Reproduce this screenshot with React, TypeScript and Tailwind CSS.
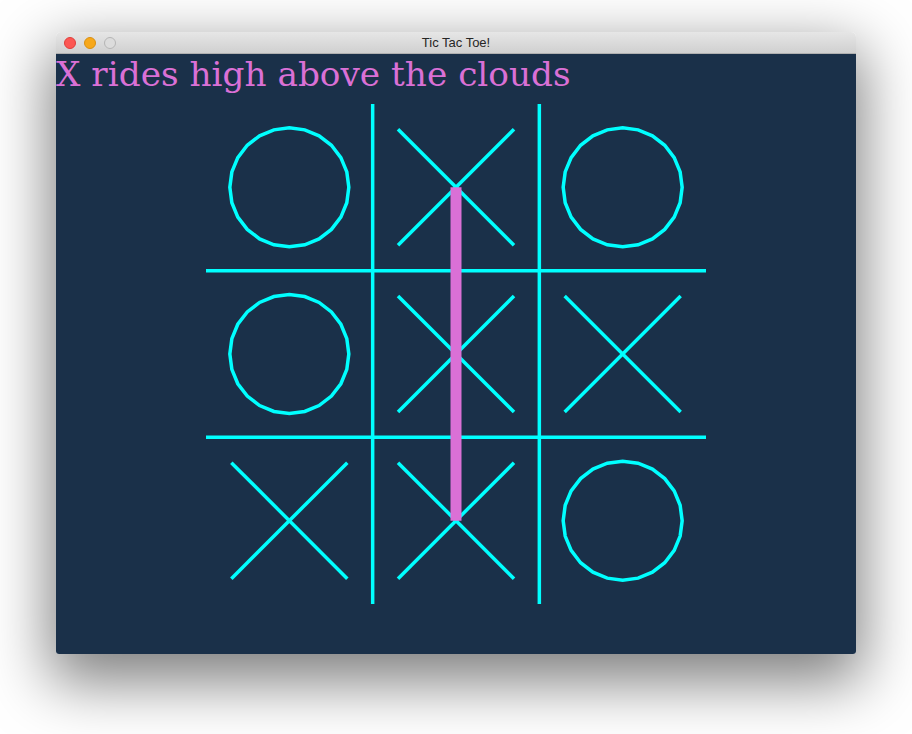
import React from 'react';

const CELL = 500 / 3;
const board: string[][] = [
  ['O', 'X', 'O'],
  ['O', 'X', 'X'],
  ['X', 'X', 'O'],
];

function ring(cx: number, cy: number, r: number, n = 24) {
  const pts: string[] = [];
  for (let i = 0; i < n; i++) {
    const a = (i / n) * Math.PI * 2;
    pts.push(`${(cx + r * Math.cos(a)).toFixed(2)},${(cy + r * Math.sin(a)).toFixed(2)}`);
  }
  return pts.join(' ');
}

function Board() {
  const ox = 150;
  return (
    <svg width={800} height={550} viewBox="0 0 800 550" className="block">
      <g stroke="#00ffff" strokeWidth={3.5}>
        <line x1={ox + CELL} y1={0} x2={ox + CELL} y2={500} />
        <line x1={ox + CELL * 2} y1={0} x2={ox + CELL * 2} y2={500} />
        <line x1={ox} y1={CELL} x2={ox + 500} y2={CELL} />
        <line x1={ox} y1={CELL * 2} x2={ox + 500} y2={CELL * 2} />
      </g>
      <g stroke="#00ffff" strokeWidth={3.5} fill="none">
        {board.map((row, r) =>
          row.map((v, c) => {
            const cx = ox + CELL * c + CELL / 2;
            const cy = CELL * r + CELL / 2;
            if (v === 'O') return <polygon key={`${r}-${c}`} points={ring(cx, cy, 59.5)} />;
            const h = 58;
            return (
              <g key={`${r}-${c}`}>
                <line x1={cx - h} y1={cy - h} x2={cx + h} y2={cy + h} />
                <line x1={cx + h} y1={cy - h} x2={cx - h} y2={cy + h} />
              </g>
            );
          })
        )}
      </g>
      <line x1={ox + CELL * 1.5} y1={CELL / 2} x2={ox + CELL * 1.5} y2={CELL * 2.5} stroke="#da70d6" strokeWidth={11} />
    </svg>
  );
}

export default function App() {
  return (
    <div className="w-[912px] h-[734px] bg-white pl-[56px] pt-[32px] overflow-hidden">
      <div className="w-[800px] rounded-t-[5px] rounded-b-[3px] overflow-hidden shadow-[0_22px_60px_6px_rgba(0,0,0,0.5)]">
        <div className="relative h-[22px] flex items-center justify-center bg-gradient-to-b from-[#e6e6e6] to-[#d0d0d0] border-b border-[#b0b0b0]">
          <div className="absolute left-[8px] top-[5px] flex gap-[8px]">
            <span className="w-[12px] h-[12px] rounded-full bg-[#fc5753] border border-[#df3e3b]" />
            <span className="w-[12px] h-[12px] rounded-full bg-[#f7a81b] border border-[#d98f12]" />
            <span className="w-[12px] h-[12px] rounded-full bg-[#dcdcdc] border border-[#b5b5b5]" />
          </div>
          <span className="text-[13px] text-[#262626] font-['Liberation_Sans',sans-serif]">Tic Tac Toe!</span>
        </div>
        <div className="h-[600px] bg-[#1a3049]">
          <div className="h-[50px] text-[34.3px] leading-[41px] text-[#da70d6] font-['DejaVu_Serif',serif] whitespace-nowrap">
            X rides high above the clouds
          </div>
          <Board />
        </div>
      </div>
    </div>
  );
}
